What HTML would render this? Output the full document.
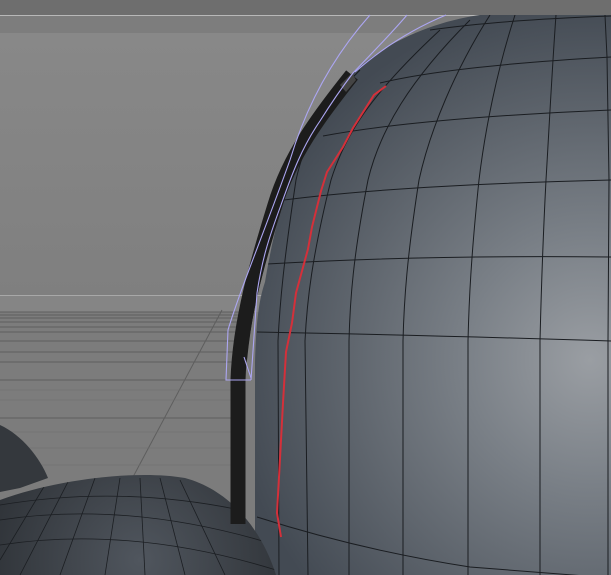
<!DOCTYPE html>
<html><head><style>html,body{margin:0;padding:0;width:611px;height:575px;overflow:hidden;background:#838383}</style></head>
<body>
<svg width="611" height="575" viewBox="0 0 611 575" xmlns="http://www.w3.org/2000/svg">
<defs>
<linearGradient id="bg" x1="0" y1="0" x2="0" y2="1"><stop offset="0" stop-color="#888"/><stop offset="1" stop-color="#7f7f7f"/></linearGradient>
<radialGradient id="sph" cx="590" cy="360" r="360" gradientUnits="userSpaceOnUse"><stop offset="0" stop-color="#9a9ea3"/><stop offset="0.35" stop-color="#7a8087"/><stop offset="1" stop-color="#434a53"/></radialGradient>
<radialGradient id="sm" cx="140" cy="560" r="160" gradientUnits="userSpaceOnUse"><stop offset="0" stop-color="#50565e"/><stop offset="1" stop-color="#2e3237"/></radialGradient>
<clipPath id="sc"><path d="M255,575 L255,367 C256,320 259,300 265,282 C272,240 280,210 288,188 C305,140 325,105 351,75 C380,45 430,22 480,15 L611,15 L611,575 Z"/></clipPath>
<clipPath id="smc"><path d="M0,575 L0,500 C60,478 140,470 185,478 C230,490 262,530 276,575 Z"/></clipPath>
</defs>
<rect x="0" y="0" width="611" height="15" fill="#6e6e6e"/>
<rect x="0" y="15" width="611" height="1" fill="#b8b8b8"/>
<rect x="0" y="16" width="611" height="17" fill="#7d7d7d"/>
<rect x="0" y="33" width="611" height="262" fill="url(#bg)"/>
<rect x="0" y="295" width="611" height="1.5" fill="#a8a8a8"/>
<rect x="0" y="296" width="611" height="16" fill="#858585"/>
<rect x="0" y="312" width="611" height="263" fill="#7c7c7c"/>
<g stroke="#5e5e5e" stroke-width="1" fill="none">
<line x1="0" y1="312" x2="240" y2="312"/><line x1="0" y1="315" x2="240" y2="315"/><line x1="0" y1="318" x2="240" y2="318"/>
<line x1="0" y1="322" x2="240" y2="322"/><line x1="0" y1="327" x2="240" y2="327"/><line x1="0" y1="332" x2="240" y2="332"/>
<line x1="0" y1="341" x2="240" y2="341"/><line x1="0" y1="352" x2="240" y2="352"/><line x1="0" y1="362" x2="240" y2="362"/>
<line x1="0" y1="380" x2="240" y2="380"/><line x1="0" y1="418" x2="240" y2="418"/>
<line x1="222" y1="310" x2="133" y2="477"/>
</g>
<g stroke="#6e6e6e" stroke-width="0.6">
<line x1="0" y1="390" x2="240" y2="390"/><line x1="0" y1="400" x2="240" y2="400"/><line x1="0" y1="432" x2="240" y2="432"/><line x1="0" y1="448" x2="240" y2="448"/><line x1="0" y1="465" x2="240" y2="465"/>
</g>
<path d="M255,575 L255,367 C256,320 259,300 265,282 C272,240 280,210 288,188 C305,140 325,105 351,75 C380,45 430,22 480,15 L611,15 L611,575 Z" fill="url(#sph)"/>
<g clip-path="url(#sc)" stroke="#1a1d21" stroke-width="1" fill="none">
<path d="M430,30 Q500,20 611,16"/>
<path d="M380,83 Q450,66 611,57"/>
<path d="M323,136 Q420,118 611,110"/>
<path d="M284,200 Q400,185 611,180"/>
<path d="M267,264 Q420,255 611,257"/>
<path d="M257,332 Q420,335 611,341"/>
<path d="M257,517 Q360,550 470,567 L611,578"/>
<path d="M279,575 L278,341 C280,300 284,260 296,180 C305,140 320,110 360,70"/>
<path d="M308,575 L305,341 C307,300 312,257 331,180 C345,135 370,95 440,30"/>
<path d="M349,575 L349,341 C350,300 353,257 368,180 C380,130 410,80 470,20"/>
<path d="M403,575 L403,341 C404,300 407,257 419,180 C430,130 455,70 490,15"/>
<path d="M468,575 L468,341 C469,300 471,257 479,180 C485,130 497,70 515,15"/>
<path d="M540,575 L540,341 C541,300 542,257 546,180 C549,130 552,70 556,15"/>
<path d="M608,575 L608,341 L609,180 L607,57 L605,15"/>
</g>
<path d="M0,575 L0,500 C60,478 140,470 185,478 C230,490 262,530 276,575 Z" fill="url(#sm)"/>
<g clip-path="url(#smc)" stroke="#1b1e22" stroke-width="0.8" fill="none">
<path d="M0,520 Q130,500 276,545"/><path d="M0,545 Q130,525 276,570"/><path d="M0,505 Q120,485 240,510"/>
<path d="M70,478 L20,575"/><path d="M95,478 L60,575"/><path d="M120,478 L105,575"/><path d="M140,478 L145,575"/><path d="M160,478 L185,575"/><path d="M180,480 L225,575"/><path d="M45,485 L0,560"/>
</g>
<path d="M0,425 C22,435 40,458 48,478 L20,488 L0,492 Z" fill="#34383d"/>
<path d="M352,75 C320,115 290,155 275,205 C258,260 240,320 238,380 L238,524" fill="none" stroke="#1c1c1c" stroke-width="15"/>
<path d="M300,150 C285,180 270,230 258,280 C250,310 246,340 244,360" fill="none" stroke="#1c1c1c" stroke-width="6"/>
<path d="M340,85 L352,73 L356,80 L346,92 Z" fill="#444"/>
<g stroke="#aca6f2" stroke-width="1.1" fill="none">
<path d="M370,15 C330,60 305,110 290,160 C265,230 240,290 228,330 L226,380 L251,380"/>
<path d="M407,15 C390,35 370,55 353,73 C340,90 330,105 320,121 C300,150 290,180 281,205 C268,240 262,260 257,293 L251,380"/>
<path d="M446,15 C410,30 380,50 355,72"/>
<path d="M244,357 L251,378"/>
</g>
<path d="M386,86 L374,95 L353,128 L343,147 L327,172 L321,191 L312,227 L308,249 L302,271 L296,293 L292,323 L286,352 L283,403 L279,477 L277,513 L281,537" fill="none" stroke="#d4303a" stroke-width="2"/>
</svg>
</body></html>
